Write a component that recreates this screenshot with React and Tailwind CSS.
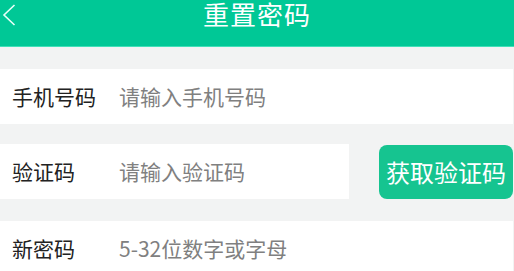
const font = { fontFamily: '"Noto Sans CJK SC", "Noto Sans", sans-serif' };

const Row = ({ label, placeholder, className = "" }) => (
  <div className={`flex items-center bg-white h-[55px] pl-3 ${className}`}>
    <span className="w-[107px] shrink-0 text-[21px] text-[#222]">{label}</span>
    <span className="text-[21px] text-[#808080]">{placeholder}</span>
  </div>
);

export default function App() {
  return (
    <div className="w-[514px] h-[271px] overflow-hidden bg-[#f2f3f3]" style={font}>
      <header className="relative h-[47px] bg-[#00c896] flex items-start justify-center border-b border-[#3fe0b8]">
        <svg className="absolute left-[2px] top-[4px]" width="14" height="22" viewBox="0 0 14 22">
          <path d="M12.5 1 L2 11 L12.5 21" fill="none" stroke="#e8fff8" strokeWidth="1.6" />
        </svg>
        <h1 className="text-[26px] leading-[28px] text-white tracking-[1px]">重置密码</h1>
      </header>
      <div className="flex flex-col pt-[22px] gap-[20px]">
        <Row label="手机号码" placeholder="请输入手机号码" className="mr-[1px]" />
        <div className="flex items-center gap-[30px]">
          <Row label="验证码" placeholder="请输入验证码" className="w-[349px]" />
          <button className="h-[54px] flex-1 mr-[1px] rounded-lg bg-[#16c490] text-white text-[24px] leading-none">
            获取验证码
          </button>
        </div>
        <Row label="新密码" placeholder="5-32位数字或字母" className="mr-[1px] mt-[2px]" />
      </div>
    </div>
  );
}
